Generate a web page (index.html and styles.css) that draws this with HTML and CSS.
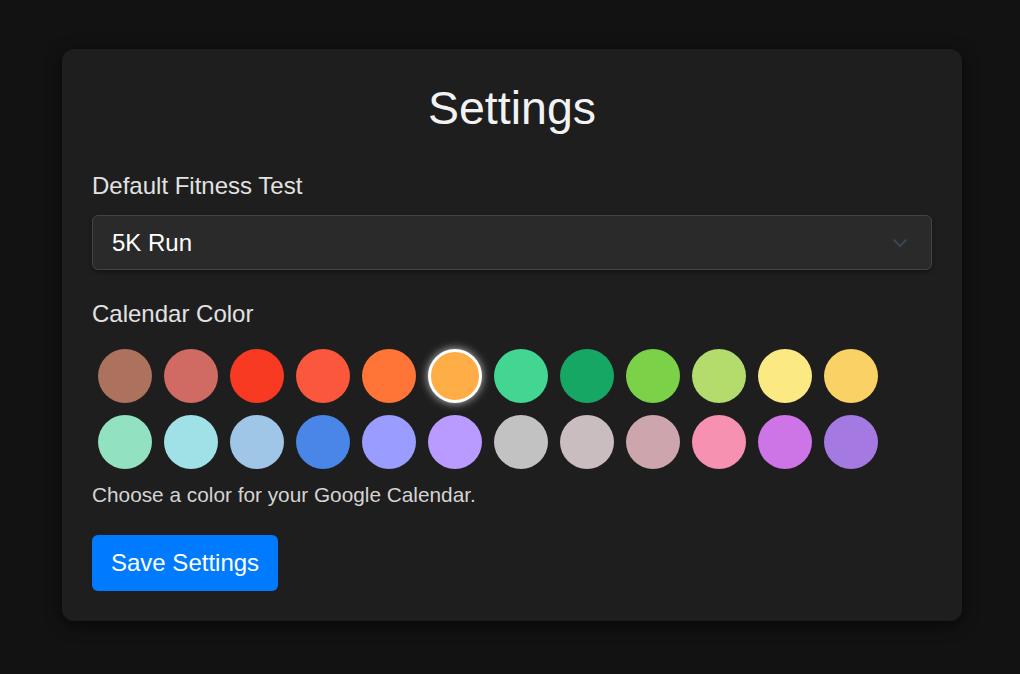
FILE: index.html
```html
<!DOCTYPE html>
<html lang="en">
<head>
<meta charset="utf-8">
<title>Settings</title>
<link rel="stylesheet" href="styles.css">
</head>
<body>
<div class="page">
  <div class="card">
    <h1 class="title">Settings</h1>
    <div class="field">
      <label class="label">Default Fitness Test</label>
      <div class="select">
        <span class="select-value">5K Run</span>
        <svg class="chevron" width="16" height="10" viewBox="0 0 16 10"><path d="M1.5 1.5 L8 8 L14.5 1.5" fill="none" stroke="#3e4552" stroke-width="2"/></svg>
      </div>
    </div>
    <div class="field field-color">
      <label class="label">Calendar Color</label>
      <div class="swatches">
        <span class="swatch" style="background:#ac725e"></span>
        <span class="swatch" style="background:#d06b64"></span>
        <span class="swatch" style="background:#f83a22"></span>
        <span class="swatch" style="background:#fa573c"></span>
        <span class="swatch" style="background:#ff7537"></span>
        <span class="swatch selected" style="background:#ffad46"></span>
        <span class="swatch" style="background:#42d692"></span>
        <span class="swatch" style="background:#16a765"></span>
        <span class="swatch" style="background:#7bd148"></span>
        <span class="swatch" style="background:#b3dc6c"></span>
        <span class="swatch" style="background:#fbe983"></span>
        <span class="swatch" style="background:#fad165"></span>
        <span class="swatch" style="background:#92e1c0"></span>
        <span class="swatch" style="background:#9fe1e7"></span>
        <span class="swatch" style="background:#9fc6e7"></span>
        <span class="swatch" style="background:#4986e7"></span>
        <span class="swatch" style="background:#9a9cff"></span>
        <span class="swatch" style="background:#b99aff"></span>
        <span class="swatch" style="background:#c2c2c2"></span>
        <span class="swatch" style="background:#cabdbf"></span>
        <span class="swatch" style="background:#cca6ac"></span>
        <span class="swatch" style="background:#f691b2"></span>
        <span class="swatch" style="background:#cd74e6"></span>
        <span class="swatch" style="background:#a47ae2"></span>
      </div>
      <p class="help">Choose a color for your Google Calendar.</p>
    </div>
    <button class="btn">Save Settings</button>
  </div>
</div>
</body>
</html>
```
FILE: styles.css
```css
html, body {
  margin: 0;
  padding: 0;
  background: #121212;
  height: 100%;
}
body {
  font-family: "Liberation Sans", Arial, sans-serif;
  color: #e0e0e0;
}
.page {
  padding: 49px 57px 0 62px;
}
.card {
  width: 840px;
  background: #1e1e1e;
  border-radius: 12px;
  padding: 30px;
  box-shadow: 0 4px 16px rgba(0, 0, 0, 0.6);
}
.title {
  margin: 3px 0 37px;
  font-size: 46.5px;
  font-weight: normal;
  text-align: center;
  color: #f2f2f2;
  line-height: 53px;
}
.field {
  display: flex;
  flex-direction: column;
}
.label {
  font-size: 24px;
  line-height: 27px;
  color: #e2e2e2;
  margin-bottom: 16px;
}
.select {
  height: 53px;
  box-sizing: content-box;
  border: 1px solid #444;
  border-radius: 6px;
  background: #2a2a2a;
  display: flex;
  align-items: center;
  justify-content: space-between;
  padding: 0 23px 0 19px;
  box-shadow: 0 2px 4px rgba(0, 0, 0, 0.35);
}
.select-value {
  font-size: 24px;
  color: #fff;
}
.chevron {
  display: block;
}
.field-color {
  margin-top: 30px;
}
.field-color .label {
  margin-bottom: 16px;
}
.swatches {
  display: flex;
  flex-wrap: wrap;
}
.swatch {
  width: 54px;
  height: 54px;
  margin: 6px;
  border-radius: 50%;
  box-sizing: border-box;
  display: block;
}
.swatch.selected {
  border: 3px solid #fff;
  box-shadow: 0 0 10px rgba(255, 255, 255, 0.75);
}
.help {
  margin: 8px 0 0;
  font-size: 20.8px;
  line-height: 23px;
  color: #d4d4d4;
}
.btn {
  margin-top: 29px;
  height: 56px;
  padding: 0 19px;
  border: none;
  border-radius: 6px;
  background: #007bff;
  color: #fff;
  font-family: "Liberation Sans", Arial, sans-serif;
  font-size: 24px;
  display: block;
}
```
